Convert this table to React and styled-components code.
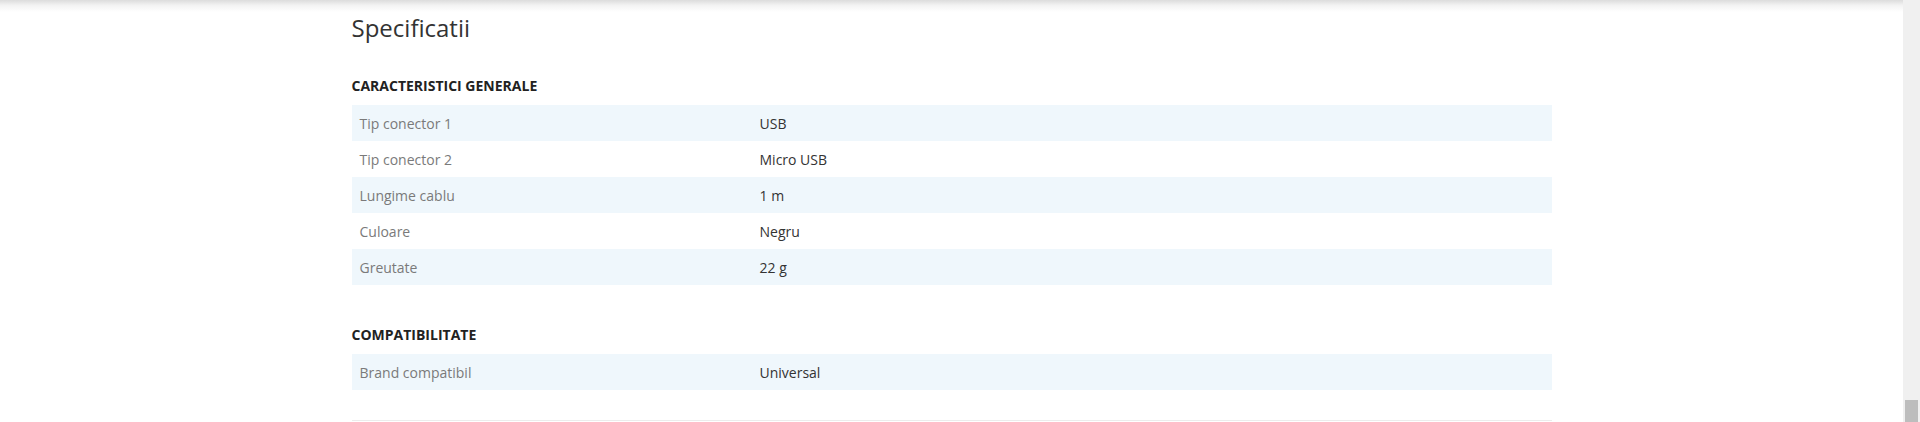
import React from "react";
import styled, { createGlobalStyle } from "styled-components";

const GlobalStyle = createGlobalStyle`
  html, body {
    margin: 0;
    padding: 0;
    background: #ffffff;
    overflow: hidden;
  }
  body {
    font-family: "Open Sans", "Liberation Sans", sans-serif;
    color: #333;
  }
`;

const Page = styled.div`
  width: calc(100% - 17px);
  min-height: 422px;
  background: #fff;
`;

const TopShade = styled.div`
  height: 12px;
  background: linear-gradient(to bottom, #dcdcdc 0%, #f3f3f3 45%, rgba(255, 255, 255, 0) 100%);
`;

const Container = styled.main`
  width: 1200px;
  margin: 0 auto;
`;

const Title = styled.h2`
  margin: 0;
  font-size: 24px;
  line-height: 32px;
  font-weight: 400;
  color: #333;
`;

const Group = styled.section`
  margin-top: ${(p) => p.$gap}px;
`;

const GroupTitle = styled.h3`
  margin: 0 0 9px;
  font-size: 14px;
  line-height: 20px;
  font-weight: 700;
  color: #222;
  text-transform: uppercase;
`;

const Table = styled.div`
  display: flex;
  flex-direction: column;
`;

const Row = styled.div`
  display: grid;
  grid-template-columns: 408px 1fr;
  height: 36px;
  align-items: center;
  background: ${(p) => (p.$striped ? "#eff7fc" : "#ffffff")};
  font-size: 14px;
`;

const Label = styled.span`
  padding-left: 8px;
  color: #7a7a7a;
`;

const Value = styled.span`
  color: #333;
`;

const Divider = styled.hr`
  margin: 30px 0 0;
  border: 0;
  border-top: 1px solid #ececec;
`;

const Scrollbar = styled.div`
  position: fixed;
  top: 0;
  right: 0;
  width: 17px;
  height: 100%;
  background: #f0f0f0;
`;

const Thumb = styled.div`
  position: absolute;
  left: 2px;
  right: 2px;
  top: 400px;
  bottom: 0;
  background: #bdbdbd;
`;

const groups = [
  {
    title: "Caracteristici generale",
    gap: 32,
    rows: [
      ["Tip conector 1", "USB"],
      ["Tip conector 2", "Micro USB"],
      ["Lungime cablu", "1 m"],
      ["Culoare", "Negru"],
      ["Greutate", "22 g"],
    ],
  },
  {
    title: "Compatibilitate",
    gap: 40,
    rows: [["Brand compatibil", "Universal"]],
  },
];

export default function App() {
  return (
    <>
      <GlobalStyle />
      <Page>
        <TopShade />
        <Container>
          <Title>Specificatii</Title>
          {groups.map((g) => (
            <Group key={g.title} $gap={g.gap}>
              <GroupTitle>{g.title}</GroupTitle>
              <Table>
                {g.rows.map(([k, v], i) => (
                  <Row key={k} $striped={i % 2 === 0}>
                    <Label>{k}</Label>
                    <Value>{v}</Value>
                  </Row>
                ))}
              </Table>
            </Group>
          ))}
          <Divider />
        </Container>
      </Page>
      <Scrollbar>
        <Thumb />
      </Scrollbar>
    </>
  );
}
